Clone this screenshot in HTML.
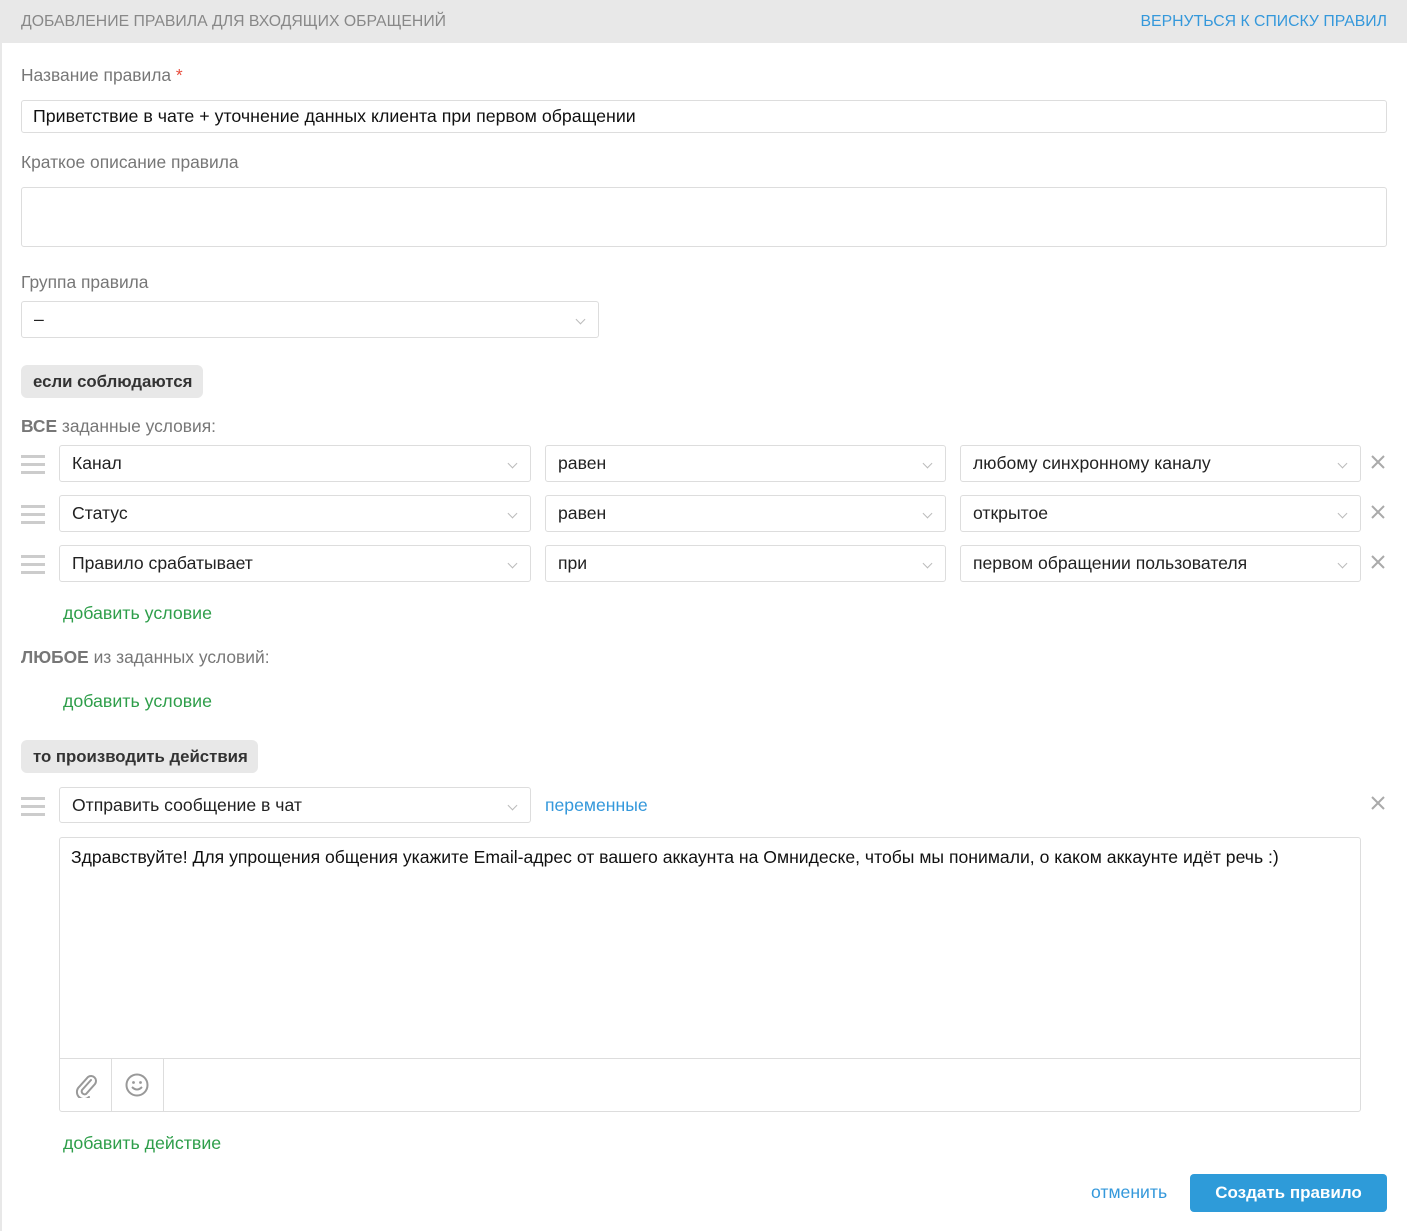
<!DOCTYPE html>
<html><head><meta charset="utf-8"><style>
*{box-sizing:border-box;margin:0;padding:0}
body{width:1407px;height:1231px;background:#fff;font-family:"Liberation Sans",sans-serif;position:relative;overflow:hidden;color:#222}
.a{position:absolute;white-space:nowrap}
.hdr{left:0;top:0;width:1407px;height:43px;background:#e8e8e8}
.lbl{color:#777;font-size:17.4px}
.box{position:absolute;border:1px solid #ddd;border-radius:3px;background:#fff}
.sel{position:absolute;border:1px solid #ddd;border-radius:3px;background:#fff;font-size:17.6px;padding-left:12px;line-height:35px;color:#222}
.sel:after{content:"";position:absolute;right:14px;top:14px;width:6px;height:6px;border-right:1px solid #bbb;border-bottom:1px solid #bbb;transform:rotate(45deg)}
.badge{position:absolute;background:#e8e8e8;border-radius:6px;font-weight:bold;font-size:16.8px;padding-left:12px;line-height:33px;color:#333}
.green{color:#2e9e4a;font-size:17.8px}
.h{position:absolute;left:21px;width:24px}
.h i{display:block;height:3px;background:#ccc;margin-bottom:5px}
.x{position:absolute;left:1370px;width:16px;height:16px}
</style></head><body>
<div style="position:absolute;left:0;top:0;width:2px;height:1231px;background:#e8e8e8"></div>
<div class="a hdr"></div>
<div class="a" style="left:21px;top:13px;font-size:15.8px;color:#888">ДОБАВЛЕНИЕ ПРАВИЛА ДЛЯ ВХОДЯЩИХ ОБРАЩЕНИЙ</div>
<div class="a" style="right:20px;top:13px;font-size:15.8px;color:#3498db">ВЕРНУТЬСЯ К СПИСКУ ПРАВИЛ</div>

<div class="a lbl" style="left:21px;top:65px">Название правила <span style="color:#e74c3c">*</span></div>
<div class="box" style="left:21px;top:100px;width:1366px;height:33px;font-size:17.8px;padding-left:11px;line-height:31px;color:#111">Приветствие в чате + уточнение данных клиента при первом обращении</div>
<div class="a lbl" style="left:21px;top:152px">Краткое описание правила</div>
<div class="box" style="left:21px;top:187px;width:1366px;height:60px"></div>
<div class="a lbl" style="left:21px;top:272px">Группа правила</div>
<div class="sel" style="left:21px;top:301px;width:578px;height:37px">–</div>

<div class="badge" style="left:21px;top:365px;width:182px;height:33px">если соблюдаются</div>
<div class="a lbl" style="left:21px;top:416px"><b style="color:#777">ВСЕ</b> заданные условия:</div>

<div class="h" style="top:455px"><i></i><i></i><i></i></div>
<div class="sel" style="left:59px;top:445px;width:472px;height:37px">Канал</div>
<div class="sel" style="left:545px;top:445px;width:401px;height:37px">равен</div>
<div class="sel" style="left:960px;top:445px;width:401px;height:37px">любому синхронному каналу</div>
<svg class="x" style="top:454px" viewBox="0 0 16 16"><path d="M2 2L14 14M14 2L2 14" stroke="#aaa" stroke-width="2"/></svg>

<div class="h" style="top:505px"><i></i><i></i><i></i></div>
<div class="sel" style="left:59px;top:495px;width:472px;height:37px">Статус</div>
<div class="sel" style="left:545px;top:495px;width:401px;height:37px">равен</div>
<div class="sel" style="left:960px;top:495px;width:401px;height:37px">открытое</div>
<svg class="x" style="top:504px" viewBox="0 0 16 16"><path d="M2 2L14 14M14 2L2 14" stroke="#aaa" stroke-width="2"/></svg>

<div class="h" style="top:555px"><i></i><i></i><i></i></div>
<div class="sel" style="left:59px;top:545px;width:472px;height:37px">Правило срабатывает</div>
<div class="sel" style="left:545px;top:545px;width:401px;height:37px">при</div>
<div class="sel" style="left:960px;top:545px;width:401px;height:37px">первом обращении пользователя</div>
<svg class="x" style="top:554px" viewBox="0 0 16 16"><path d="M2 2L14 14M14 2L2 14" stroke="#aaa" stroke-width="2"/></svg>

<div class="a green" style="left:63px;top:603px">добавить условие</div>
<div class="a lbl" style="left:21px;top:647px"><b style="color:#777">ЛЮБОЕ</b> из заданных условий:</div>
<div class="a green" style="left:63px;top:691px">добавить условие</div>

<div class="badge" style="left:21px;top:740px;width:237px;height:33px">то производить действия</div>
<div class="h" style="top:797px"><i></i><i></i><i></i></div>
<div class="sel" style="left:59px;top:787px;width:472px;height:36px;line-height:34px">Отправить сообщение в чат</div>
<div class="a" style="left:545px;top:795px;font-size:17.6px;color:#3498db">переменные</div>
<svg class="x" style="top:795px" viewBox="0 0 16 16"><path d="M2 2L14 14M14 2L2 14" stroke="#aaa" stroke-width="2"/></svg>

<div class="box" style="left:59px;top:837px;width:1302px;height:275px">
<div class="a" style="left:11px;top:9px;font-size:17.6px;color:#111">Здравствуйте! Для упрощения общения укажите Email-адрес от вашего аккаунта на Омнидеске, чтобы мы понимали, о каком аккаунте идёт речь :)</div>
<div class="a" style="left:0;top:220px;width:1300px;height:1px;background:#ddd"></div>
<div class="a" style="left:51px;top:221px;width:1px;height:53px;background:#ddd"></div>
<div class="a" style="left:103px;top:221px;width:1px;height:53px;background:#ddd"></div>
<svg class="a" style="left:14px;top:234px" width="24" height="26" viewBox="0 0 24 26"><path d="M17 8L8 18a3 3 0 0 0 4 4l9-10a5 5 0 0 0-7-7L5 15a7 7 0 0 0 10 10" fill="none" stroke="#999" stroke-width="2" stroke-linecap="round"/></svg>
<svg class="a" style="left:65px;top:235px" width="24" height="24" viewBox="0 0 24 24"><circle cx="12" cy="12" r="10.5" fill="none" stroke="#999" stroke-width="2"/><circle cx="8.5" cy="9.5" r="1.4" fill="#999"/><circle cx="15.5" cy="9.5" r="1.4" fill="#999"/><path d="M7 14q5 5 10 0" fill="none" stroke="#999" stroke-width="2"/></svg>
</div>

<div class="a green" style="left:63px;top:1133px">добавить действие</div>
<div class="a" style="left:1091px;top:1182px;font-size:17.6px;color:#3498db">отменить</div>
<div class="a" style="left:1190px;top:1174px;width:197px;height:38px;background:#2e9bd9;border-radius:4px;color:#fff;font-weight:bold;font-size:17px;text-align:center;line-height:38px">Создать правило</div>
</body></html>
